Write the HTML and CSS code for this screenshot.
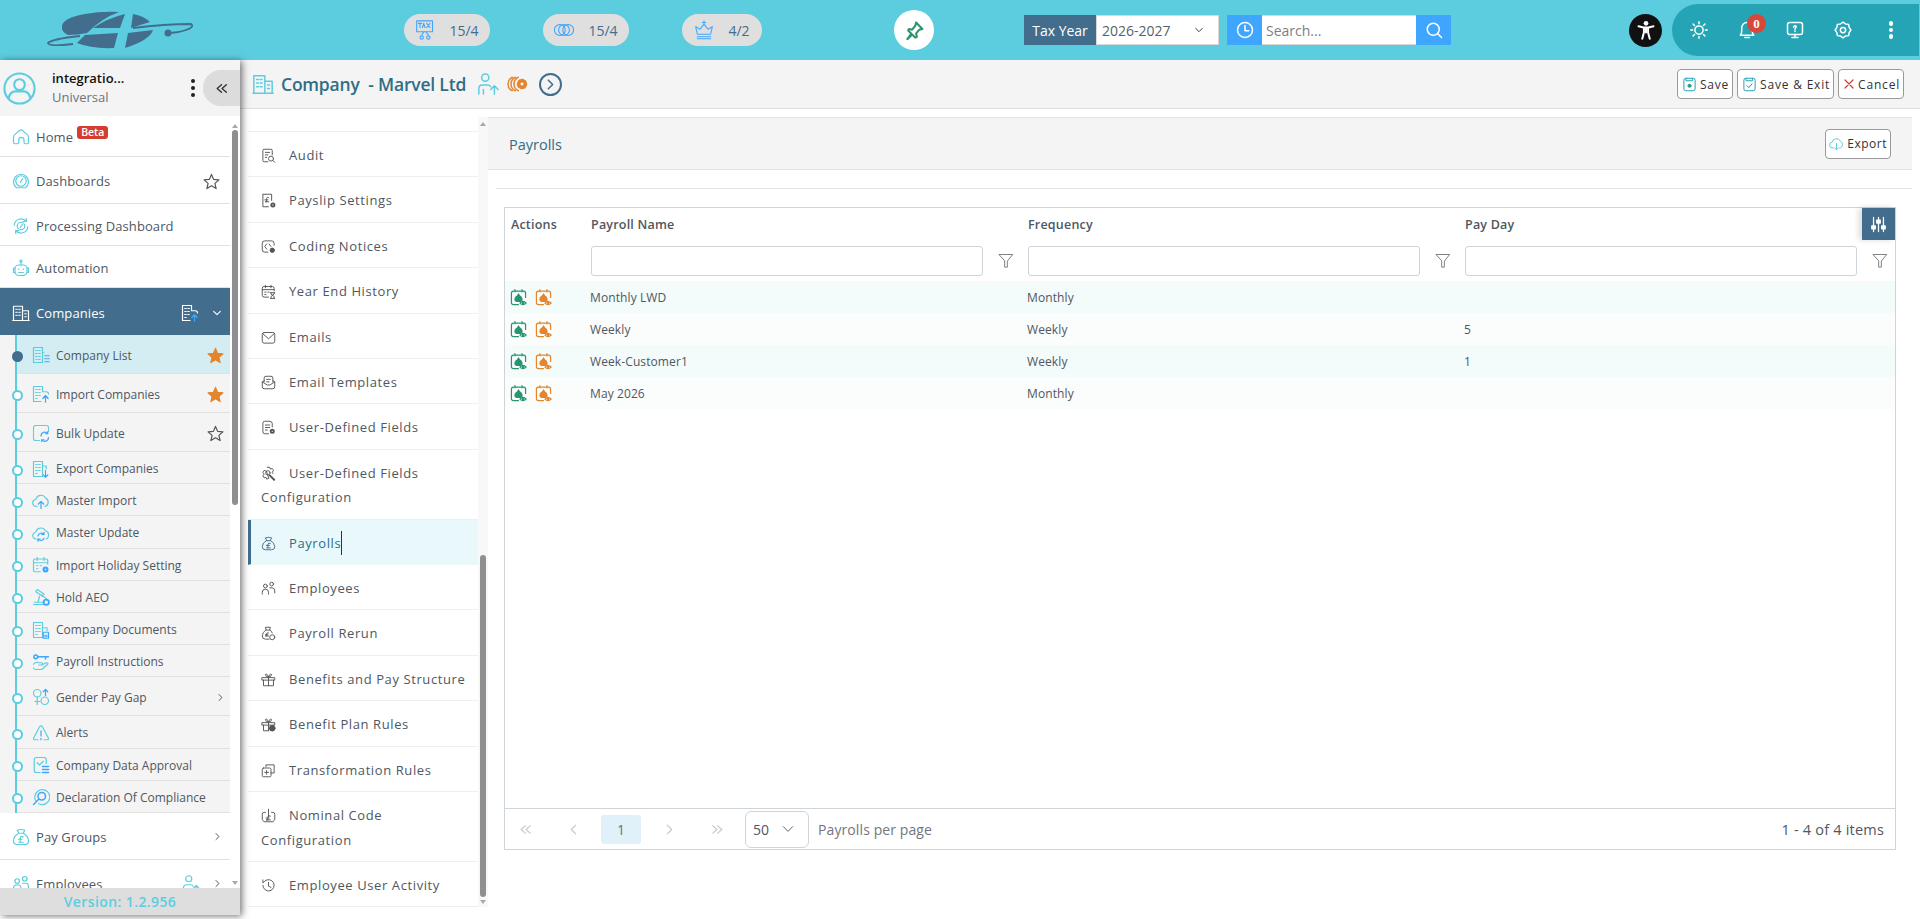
FILE: index.html
```html
<!DOCTYPE html>
<html lang="en">
<head>
    <meta charset="UTF-8">
    <meta name="viewport" content="width=device-width, initial-scale=1.0">
    <title>Company - Payrolls</title>
    <link rel="stylesheet" href="styles.css">
</head>
<body>
    <!-- Icon sprite -->
    <svg class="sprite" xmlns="http://www.w3.org/2000/svg">
        <defs>
            <symbol id="i-home" viewBox="0 0 24 24"><path d="M4 21q-2 0-2-2v-7q0-2 2-3.500l6.500-5.500q1.500-1 3 0l6.500 5.500q2 1.500 2 3.500v7q0 2-2 2h-2q-2 0-2-2v-3a3.500 3.500 0 0 0-7 0v3q0 2-2 2z"/></symbol>
            <symbol id="i-gauge" viewBox="0 0 24 24"><path d="M6 21a10 10 0 1 1 12 0z"/><circle cx="12" cy="12" r="7"/><path d="M11 14l3-5"/></symbol>
            <symbol id="i-gauge-sync" viewBox="0 0 24 24"><path d="M3 11a9 9 0 0 1 16-5M21 13a9 9 0 0 1-16 5"/><path d="M19 2v4h-4M5 22v-4h4"/><circle cx="12" cy="12" r="5"/><path d="M11 14l3-4"/></symbol>
            <symbol id="i-robot" viewBox="0 0 24 24"><circle cx="12" cy="3" r="1.500"/><path d="M12 5v3"/><rect x="4" y="8" width="16" height="14" rx="5"/><path d="M4 12H2v6h2M20 12h2v6h-2M9 13v1M15 13v1M9 18h6"/></symbol>
            <symbol id="i-building" viewBox="0 0 24 24"><path d="M2 22V3h12v19zM14 9h8v13h-8M1 22h22M5 7h2M9 7h2M5 11h2M9 11h2M5 15h2M9 15h2M17 13h2M17 17h2"/></symbol>
            <symbol id="i-building-up" viewBox="0 0 24 24"><path d="M12 22H2V2h12v7h5q3 0 3 3M5 6h2M9 6h2M5 10h2M9 10h2M5 14h2M9 14h2M5 18h2"/><path class="accent" d="M18 23v-8M14.500 18l3.500-4 3.500 4"/></symbol>
            <symbol id="i-building-list" viewBox="0 0 24 24"><path d="M2 22V2h12v20zM14 9h2M5 6h2M9 6h2M5 10h2M9 10h2M5 14h2M9 14h2M5 18h2M9 18h2"/><path class="accent" d="M17 13h6M17 17h6M17 21h6"/></symbol>
            <symbol id="i-building-down" viewBox="0 0 24 24"><path d="M2 22V2h12v20zM14 8h5v4M5 6h2M9 6h2M5 10h2M9 10h2M5 14h2M9 14h2M5 18h2"/><path class="accent" d="M18 14v9M15 20l3 3 3-3"/></symbol>
            <symbol id="i-building-doc" viewBox="0 0 24 24"><path d="M2 22V2h12v20zM14 9h6v4M5 6h2M9 6h2M5 10h2M9 10h2M5 14h2M9 14h2M5 18h2"/><path class="accent" d="M15 15h7v8h-7zM17 19h3M17 21h3"/></symbol>
            <symbol id="i-bulk" viewBox="0 0 24 24"><path stroke-dasharray="2 1" d="M10 22H5q-3 0-3-3V5q0-3 3-3h14q3 0 3 3v5"/><path class="accent" d="M12 16a5 5 0 0 1 9-3M22 18a5 5 0 0 1-9 3M21 10v3h-3M13 24v-3h3"/></symbol>
            <symbol id="i-cloud-up" viewBox="0 0 24 24"><path d="M7 19H6a4.500 4.500 0 0 1-1-9 7 7 0 0 1 13-2 6 6 0 0 1 0 11h-1"/><path class="accent" d="M12 22v-9M8.500 16l3.500-3.500 3.500 3.500"/></symbol>
            <symbol id="i-cloud-sync" viewBox="0 0 24 24"><path d="M6 20a4.500 4.500 0 0 1-1-9 7 7 0 0 1 13-2 6 6 0 0 1 1 11"/><path class="accent" d="M8 16a4.500 4.500 0 0 1 8-2M16 19a4.500 4.500 0 0 1-8 1M16 11v3h-3M8 23v-3h3"/></symbol>
            <symbol id="i-cal-gear" viewBox="0 0 24 24"><path d="M11 21H4q-2 0-2-2V6q0-2 2-2h15q2 0 2 2v5M2 9h19M7 2v4M16 2v4M6 13h2M11 13h2M6 17h2"/><circle class="accent" cx="18" cy="18" r="2.500" stroke-width="3"/></symbol>
            <symbol id="i-hold" viewBox="0 0 24 24"><path d="M2 22h14M3 19h12M8 19l2-8M5 5l9 6 2-3-9-6zM12 9l7 5"/><circle class="accent" cx="19" cy="19" r="3.500" stroke-width="2.400"/></symbol>
            <symbol id="i-hand-key" viewBox="0 0 24 24"><path d="M2 15q3-4 7-2h4q2 1 0 3h-4M13 16l6-3q3 0 2 2l-7 6q-1 1-3 1H5q-2 0-3-2"/><circle class="accent" cx="5" cy="5" r="2.500" stroke-width="2"/><path class="accent" d="M8 5h14M18 5v3" stroke-width="2"/></symbol>
            <symbol id="i-gender" viewBox="0 0 24 24"><circle cx="7" cy="7" r="5"/><path d="M7 12v10M4 18h6"/><circle cx="17" cy="17" r="5"/><path class="accent" d="M18 10V2M15 5l3-3 3 3"/></symbol>
            <symbol id="i-alert" viewBox="0 0 24 24"><path d="M8 21H4q-3 0-1.500-3L10 4q2-3 4 0l7.500 14q1.500 3-1.500 3h-4"/><path class="accent" d="M12 9v7M12 19v2"/></symbol>
            <symbol id="i-approve" viewBox="0 0 24 24"><path d="M11 22H6q-3 0-3-3V5q0-3 3-3h10q3 0 3 3v5"/><path d="M7 9l3 3 5-5"/><path class="accent" d="M14 14h8M14 18h8M14 22h8" stroke-width="2.200"/></symbol>
            <symbol id="i-search-circle" viewBox="0 0 24 24"><path d="M5 17a10 10 0 1 1 4 4"/><circle class="accent" cx="13" cy="11" r="5" stroke-width="2"/><path class="accent" d="M9 15l-7 7" stroke-width="2"/></symbol>
            <symbol id="i-moneybag" viewBox="0 0 24 24"><path d="M9 7L7 3q5-2 10 0l-2 4zM9 7q-7 4-7 10 0 5 5 5h10q5 0 5-5 0-6-7-10"/><path d="M15 12q-3-2-4 1v5q0 1-2 1h6M8.500 15h5"/></symbol>
            <symbol id="i-people" viewBox="0 0 24 24"><circle cx="7" cy="8" r="3"/><circle cx="17" cy="5" r="3"/><path d="M2 21v-3q0-5 5-5t5 5v3M14 11h4q4 0 4 5v3"/></symbol>
            <symbol id="i-star" viewBox="0 0 24 24"><path d="M12 2l3 7 7.500.7-5.700 5 1.700 7.300-6.500-3.900L5.500 22l1.700-7.300-5.700-5L9 9z"/></symbol>
            <symbol id="i-audit" viewBox="0 0 24 24"><path d="M11 22H5q-2 0-2-2V4q0-2 2-2h11q2 0 2 2v7M7 7h7M7 11h4M7 15h2"/><circle cx="16" cy="17" r="4"/><path d="M19 20l3 3"/></symbol>
            <symbol id="i-payslip" viewBox="0 0 24 24"><path stroke-dasharray="2 1" d="M12 22H3V2h14v11"/><path d="M12 7q-3-1-3 2v5H6.500h6M6 11h5"/><circle cx="19" cy="19" r="2.500" stroke-width="3"/></symbol>
            <symbol id="i-coding" viewBox="0 0 24 24"><path d="M11 21H6q-4 0-4-4V7q0-4 4-4h11q4 0 4 4v3M9 8l-3 4 3 4M13 8l3 4"/><circle cx="18" cy="18" r="3.500" fill="currentColor"/></symbol>
            <symbol id="i-year" viewBox="0 0 24 24"><path d="M12 21H5q-3 0-3-3V7q0-3 3-3h13q3 0 3 3v4M2 9h19M7 2v4M16 2v4M6 13h2M11 13h2M6 17h2"/><path d="M15 14h7M15 23h7M16 14v2l5 4v3M21 14v2l-5 4v3"/></symbol>
            <symbol id="i-mail" viewBox="0 0 24 24"><rect x="2" y="4" width="20" height="17" rx="3"/><path d="M3 6l9 8 9-8"/></symbol>
            <symbol id="i-mail-open" viewBox="0 0 24 24"><path d="M5 11V5q0-3 3-3h8q3 0 3 3v6M9 7h6M9 11h4M2 11v8q0 3 3 3h14q3 0 3-3v-8l-3-2M5 9l-3 2 8 5h4l8-5"/></symbol>
            <symbol id="i-fields" viewBox="0 0 24 24"><path d="M12 22H6q-3 0-3-3V5q0-3 3-3h8q4 0 4 4v5M7 8h7M7 12h7M7 16h3"/><circle cx="18" cy="18" r="2.500" stroke-width="3"/></symbol>
            <symbol id="i-cog-wrench" viewBox="0 0 24 24"><path d="M10 2h4l1 3 3-1 2 3-2 3 1 2M12 20l-3 1-1-3-3 1-2-3 2-3-2-3 2-3 3 1z"/><circle cx="11" cy="11" r="3.500"/><path d="M14 15l7 7" stroke-width="3"/></symbol>
            <symbol id="i-bag-clock" viewBox="0 0 24 24"><path d="M8 6L7 2h8l-1 4zM8 6q-6 4-6 10 0 5 5 5h6M14 6q3 2 4 5"/><path d="M12 11q-3-1-3 2v3H7h5M7 14h4"/><circle cx="18" cy="18" r="4"/></symbol>
            <symbol id="i-gift" viewBox="0 0 24 24"><path d="M2 9h20v4H2zM4 13v9h16v-9M12 9v13M12 8Q7 8 7 4q2-3 5 4 3-7 5-4 0 4-5 4"/></symbol>
            <symbol id="i-gift-check" viewBox="0 0 24 24"><path d="M2 9h20v4H2zM4 13v9h8M12 9v13M20 13v1M12 8Q7 8 7 4q2-3 5 4 3-7 5-4 0 4-5 4"/><circle cx="18" cy="18" r="4.500" fill="currentColor"/></symbol>
            <symbol id="i-transform" viewBox="0 0 24 24"><path d="M8 6V3h13v13h-5"/><rect x="2" y="8" width="14" height="14" rx="2"/><path d="M9 12v6M6 15h6"/></symbol>
            <symbol id="i-nominal" viewBox="0 0 24 24"><path d="M4 21q-2-1-2-3V10q0-3 3-3h2M20 21q2-1 2-3V10q0-3-3-3h-2M12 2v12"/><path d="M15 13q-3-2-4 1v5H8h7M8 16h5"/><path d="M5 22h14"/></symbol>
            <symbol id="i-history" viewBox="0 0 24 24"><path d="M3 12a9 9 0 1 0 3-7L3 8V3M12 7v6l4 2"/></symbol>
            <symbol id="i-tax" viewBox="0 0 24 24"><path d="M2 1h19v13H2zM11 14l-3 4M13 14l3 4"/><circle cx="8" cy="21" r="2"/><circle cx="16" cy="21" r="2"/><path d="M4 4h4M6 4v5M9 9l1.500-5L12 9M14 4l4 5M18 4l-4 5"/></symbol>
            <symbol id="i-rings" viewBox="0 0 24 24"><circle cx="7" cy="12" r="6.500"/><circle cx="12" cy="12" r="6.500"/><circle cx="17" cy="12" r="6.500"/></symbol>
            <symbol id="i-crown" viewBox="0 0 24 24"><path d="M4 17L2 8l5 3 5-6 5 6 5-3-2 9zM4 20h16M4 22.500h16M12 1v4M10 3h4" stroke-dasharray="2.200 .8"/></symbol>
            <symbol id="i-person-up" viewBox="0 0 24 24"><circle cx="9" cy="5" r="4"/><path d="M2 23v-6q0-4 4-4h5q3 0 4 2M7 18v5M19 23v-9M15 18l4-4 4 4"/></symbol>
            <symbol id="i-cog-ring" viewBox="0 0 24 24"><path d="M7 3a10 10 0 0 0 0 18M11 3a10 10 0 0 0 0 18M3 3a10 10 0 0 0 0 18" fill="none"/><circle cx="16" cy="12" r="4" stroke-width="4" stroke-dasharray="3 1"/><circle cx="16" cy="12" r="6" stroke-width="2" stroke-dasharray="2.500 2"/></symbol>
            <symbol id="i-pin" viewBox="0 0 24 24"><path d="M14 2l8 8-4 1-4 5 1 4-2 1-4-4-6 6 5-7-4-4 1-2 4 1 4-5z"/></symbol>
            <symbol id="i-clock" viewBox="0 0 24 24"><circle cx="12" cy="12" r="10"/><path d="M12 6v7h5"/></symbol>
            <symbol id="i-search" viewBox="0 0 24 24"><circle cx="11" cy="11" r="8"/><path d="M17 17l5 5"/></symbol>
            <symbol id="i-a11y" viewBox="0 0 24 24"><circle cx="12" cy="4" r="2.800" fill="currentColor" stroke="none"/><path d="M3 7.500l6 1.500h6l6-1.500M12 9v6M9.500 10v5l-2 7.500M14.500 10v5l2 7.500" stroke-width="2.400"/></symbol>
            <symbol id="i-sun" viewBox="0 0 24 24"><circle cx="12" cy="12" r="5.500"/><path d="M12 1v2.500M12 20.500V23M1 12h2.500M20.500 12H23M4.200 4.200l1.800 1.800M18 18l1.800 1.800M4.200 19.800L6 18M18 6l1.800-1.800"/></symbol>
            <symbol id="i-bell" viewBox="0 0 24 24"><path d="M3 19q2-2 2-6V9a7 7 0 0 1 14 0v4q0 4 2 6zM9 22h6"/></symbol>
            <symbol id="i-help" viewBox="0 0 24 24"><rect x="2" y="2" width="20" height="16" rx="3"/><path d="M8 22h8M12 18v4M10 8q1-2 3-1.500 1.500 1-1 3.500v1M12 13v1"/></symbol>
            <symbol id="i-gear" viewBox="0 0 24 24"><path d="M12 1.500l3.500 2.500 4 .5.700 4 2.300 3.500-2.300 3.500-.7 4-4 .5-3.500 2.500-3.500-2.500-4-.5-.7-4L1.500 12l2.300-3.500.7-4 4-.5z"/><circle cx="12" cy="12" r="3.500"/></symbol>
            <symbol id="i-sliders" viewBox="0 0 24 24"><path d="M5 2v20M12 2v20M19 2v20"/><rect x="2.500" y="14" width="5" height="4" fill="currentColor"/><rect x="9.500" y="6" width="5" height="4" fill="currentColor"/><rect x="16.500" y="14" width="5" height="4" fill="currentColor"/></symbol>
            <symbol id="i-filter" viewBox="0 0 24 24"><path d="M2 3h20l-8 10v9h-4v-9z"/></symbol>
            <symbol id="i-save" viewBox="0 0 24 24"><path d="M7 2H6Q3 2 3 5v14q0 3 3 3h12q3 0 3-3V5q0-3-3-3h-1M7 2h10v4H7z"/><circle class="green" cx="12" cy="14" r="2.500" fill="#2a9d7c"/></symbol>
            <symbol id="i-save-exit" viewBox="0 0 24 24"><path d="M7 2H6Q3 2 3 5v14q0 3 3 3h12q3 0 3-3V5q0-3-3-3h-1M7 2h10v4H7z"/><path class="green" d="M8 14l3 3 5-6"/></symbol>
            <symbol id="i-cloud-down" viewBox="0 0 24 24"><path d="M7 19H6a4.500 4.500 0 0 1-1-9 7 7 0 0 1 13-2 6 6 0 0 1 0 11h-1M12 12v10M9 19l3 3 3-3"/></symbol>
            <symbol id="i-chev-down" viewBox="0 0 24 24"><path d="M4 8l8 8 8-8"/></symbol>
            <symbol id="i-chev-right" viewBox="0 0 24 24"><path d="M8 4l8 8-8 8"/></symbol>
            <symbol id="i-chev-left" viewBox="0 0 24 24"><path d="M16 4l-8 8 8 8"/></symbol>
            <symbol id="i-first" viewBox="0 0 24 24"><path d="M12 5l-8 7 8 7M21 5l-8 7 8 7"/></symbol>
            <symbol id="i-last" viewBox="0 0 24 24"><path d="M3 5l8 7-8 7M12 5l8 7-8 7"/></symbol>
            <symbol id="i-avatar" viewBox="0 0 34 34"><circle cx="17" cy="17" r="15.500"/><circle cx="17" cy="13" r="5.500"/><path d="M6 27q1-7 7-7h8q6 0 7 7"/></symbol>
            <symbol id="i-act" viewBox="0 0 24 24"><path d="M12 22H5q-3 0-3-3V6q0-3 3-3h14q3 0 3 3v6M7 1v3M17 1v3"/><path d="M12 7l1.500 2.500q3.500 2 3.500 5 0 3-3 3h-4q-3 0-3-3 0-3 3.500-5z" fill="currentColor"/><path d="M14 20q4-5 9 0-5 4-9 0z" stroke-width="1.500"/><circle cx="18.500" cy="20" r="1" fill="currentColor"/></symbol>
            <symbol id="i-logo" viewBox="0 0 160 50">
                <path class="logo-body" d="M22 21Q23 13 45 9 62 6 79 7 62 13 47 28 38 30 28 30 21 27 22 21z"/>
                <path class="logo-body" d="M53 23Q68 13 85 9L80 23z"/>
                <path class="logo-body" d="M93 9Q104 11 110 17 100 20 91 23z"/>
                <path class="logo-body" d="M45 30L78 28 74 43Q52 44 37 38z"/>
                <path class="logo-body" d="M88 28L113 25Q110 35 85 43z"/>
                <path class="logo-orbit" d="M40 31Q12 34 8 38 9 42 33 39M93 23Q125 19 151 19 155 22 146 25 138 28 130 28"/>
                <circle class="logo-dot" cx="128" cy="28" r="3.500"/>
            </symbol>
        </defs>
    </svg>

    <!-- Top bar -->
    <header class="topbar">
        <a class="logo" href="#home"><svg class="logo-svg"><use href="#i-logo"/></svg></a>
        <div class="counts">
            <div class="count"><svg class="icon count-icon"><use href="#i-tax"/></svg>15/4</div>
            <div class="count"><svg class="icon count-icon"><use href="#i-rings"/></svg>15/4</div>
            <div class="count count-small"><svg class="icon count-icon"><use href="#i-crown"/></svg>4/2</div>
        </div>
        <button class="pin-btn"><svg class="icon pin-icon"><use href="#i-pin"/></svg></button>
        <div class="tax-year">
            <span class="tax-label">Tax Year</span>
            <div class="tax-select">2026-2027<svg class="icon tax-chev"><use href="#i-chev-down"/></svg></div>
        </div>
        <div class="search">
            <button class="search-btn"><svg class="icon search-icon"><use href="#i-clock"/></svg></button>
            <input class="search-input" type="text" placeholder="Search...">
            <button class="search-btn search-go"><svg class="icon search-icon"><use href="#i-search"/></svg></button>
        </div>
        <button class="a11y-btn"><svg class="icon a11y-icon"><use href="#i-a11y"/></svg></button>
        <div class="tools">
            <svg class="icon tool-icon"><use href="#i-sun"/></svg>
            <div class="bell">
                <svg class="icon tool-icon"><use href="#i-bell"/></svg>
                <span class="badge">0</span>
            </div>
            <svg class="icon tool-icon"><use href="#i-help"/></svg>
            <svg class="icon tool-icon"><use href="#i-gear"/></svg>
            <div class="dots dots-white"><i></i><i></i><i></i></div>
        </div>
    </header>

    <div class="layout">
        <!-- Sidebar -->
        <aside class="sidebar">
            <div class="user">
                <svg class="icon user-avatar"><use href="#i-avatar"/></svg>
                <div class="user-info">
                    <div class="user-name">integratio...</div>
                    <div class="user-role">Universal</div>
                </div>
                <div class="dots"><i></i><i></i><i></i></div>
                <button class="collapse"><svg class="icon collapse-icon"><use href="#i-first"/></svg></button>
            </div>
            <div class="side-scroll">
                <nav class="side-nav">
                    <a class="nav-item home-item"><svg class="icon nav-icon"><use href="#i-home"/></svg>Home<span class="beta">Beta</span></a>
                    <a class="nav-item tall"><svg class="icon nav-icon"><use href="#i-gauge"/></svg>Dashboards<svg class="icon star"><use href="#i-star"/></svg></a>
                    <a class="nav-item"><svg class="icon nav-icon"><use href="#i-gauge-sync"/></svg>Processing Dashboard</a>
                    <a class="nav-item"><svg class="icon nav-icon"><use href="#i-robot"/></svg>Automation</a>
                    <a class="nav-item tall nav-open"><svg class="icon nav-icon"><use href="#i-building"/></svg>Companies<svg class="icon nav-extra"><use href="#i-building-up"/></svg><svg class="icon nav-chev"><use href="#i-chev-down"/></svg></a>
                    <div class="sub-list">
                        <a class="sub-item tall active"><svg class="icon sub-icon"><use href="#i-building-list"/></svg>Company List<svg class="icon star starred"><use href="#i-star"/></svg></a>
                        <a class="sub-item tall"><svg class="icon sub-icon"><use href="#i-building-up"/></svg>Import Companies<svg class="icon star starred"><use href="#i-star"/></svg></a>
                        <a class="sub-item tall"><svg class="icon sub-icon"><use href="#i-bulk"/></svg>Bulk Update<svg class="icon star"><use href="#i-star"/></svg></a>
                        <a class="sub-item"><svg class="icon sub-icon"><use href="#i-building-down"/></svg>Export Companies</a>
                        <a class="sub-item"><svg class="icon sub-icon"><use href="#i-cloud-up"/></svg>Master Import</a>
                        <a class="sub-item"><svg class="icon sub-icon"><use href="#i-cloud-sync"/></svg>Master Update</a>
                        <a class="sub-item"><svg class="icon sub-icon"><use href="#i-cal-gear"/></svg>Import Holiday Setting</a>
                        <a class="sub-item"><svg class="icon sub-icon"><use href="#i-hold"/></svg>Hold AEO</a>
                        <a class="sub-item"><svg class="icon sub-icon"><use href="#i-building-doc"/></svg>Company Documents</a>
                        <a class="sub-item"><svg class="icon sub-icon"><use href="#i-hand-key"/></svg>Payroll Instructions</a>
                        <a class="sub-item tall"><svg class="icon sub-icon"><use href="#i-gender"/></svg>Gender Pay Gap<svg class="icon sub-chev"><use href="#i-chev-right"/></svg></a>
                        <a class="sub-item"><svg class="icon sub-icon"><use href="#i-alert"/></svg>Alerts</a>
                        <a class="sub-item"><svg class="icon sub-icon"><use href="#i-approve"/></svg>Company Data Approval</a>
                        <a class="sub-item"><svg class="icon sub-icon"><use href="#i-search-circle"/></svg>Declaration Of Compliance</a>
                    </div>
                    <a class="nav-item tall"><svg class="icon nav-icon"><use href="#i-moneybag"/></svg>Pay Groups<svg class="icon nav-chev"><use href="#i-chev-right"/></svg></a>
                    <a class="nav-item tall"><svg class="icon nav-icon"><use href="#i-people"/></svg>Employees<svg class="icon nav-extra"><use href="#i-person-up"/></svg><svg class="icon nav-chev"><use href="#i-chev-right"/></svg></a>
                </nav>
                <div class="side-track"><div class="arrow-up"></div><div class="side-thumb"></div><div class="arrow-down"></div></div>
            </div>
            <div class="version">Version: 1.2.956</div>
        </aside>

        <div class="main">
            <!-- Title bar -->
            <div class="titlebar">
                <svg class="icon title-icon"><use href="#i-building"/></svg>
                <h1 class="title">Company&nbsp; - Marvel Ltd</h1>
                <svg class="icon title-person"><use href="#i-person-up"/></svg>
                <svg class="icon title-cog"><use href="#i-cog-ring"/></svg>
                <span class="title-next"><svg class="icon next-icon"><use href="#i-chev-right"/></svg></span>
                <div class="title-actions">
                    <button class="btn"><svg class="icon btn-icon"><use href="#i-save"/></svg>Save</button>
                    <button class="btn"><svg class="icon btn-icon"><use href="#i-save-exit"/></svg>Save &amp; Exit</button>
                    <button class="btn"><svg class="icon btn-x" viewBox="0 0 24 24"><path d="M4 4l16 16M20 4L4 20"/></svg>Cancel</button>
                </div>
            </div>

            <div class="work">
                <!-- Section menu -->
                <div class="section-col">
                    <div class="section-list">
                        <div class="section-cut"></div>
                        <a class="section-item"><svg class="icon section-icon"><use href="#i-audit"/></svg>Audit</a>
                        <a class="section-item"><svg class="icon section-icon"><use href="#i-payslip"/></svg>Payslip Settings</a>
                        <a class="section-item"><svg class="icon section-icon"><use href="#i-coding"/></svg>Coding Notices</a>
                        <a class="section-item"><svg class="icon section-icon"><use href="#i-year"/></svg>Year End History</a>
                        <a class="section-item"><svg class="icon section-icon"><use href="#i-mail"/></svg>Emails</a>
                        <a class="section-item"><svg class="icon section-icon"><use href="#i-mail-open"/></svg>Email Templates</a>
                        <a class="section-item"><svg class="icon section-icon"><use href="#i-fields"/></svg>User-Defined Fields</a>
                        <a class="section-item"><svg class="icon section-icon"><use href="#i-cog-wrench"/></svg>User-Defined Fields Configuration</a>
                        <a class="section-item current"><svg class="icon section-icon"><use href="#i-moneybag"/></svg><span class="caret">Payrolls</span></a>
                        <a class="section-item"><svg class="icon section-icon"><use href="#i-people"/></svg>Employees</a>
                        <a class="section-item"><svg class="icon section-icon"><use href="#i-bag-clock"/></svg>Payroll Rerun</a>
                        <a class="section-item"><svg class="icon section-icon"><use href="#i-gift"/></svg>Benefits and Pay Structure</a>
                        <a class="section-item"><svg class="icon section-icon"><use href="#i-gift-check"/></svg>Benefit Plan Rules</a>
                        <a class="section-item"><svg class="icon section-icon"><use href="#i-transform"/></svg>Transformation Rules</a>
                        <a class="section-item"><svg class="icon section-icon"><use href="#i-nominal"/></svg>Nominal Code Configuration</a>
                        <a class="section-item"><svg class="icon section-icon"><use href="#i-history"/></svg>Employee User Activity</a>
                    </div>
                    <div class="section-track"><div class="arrow-up"></div><div class="section-thumb"></div><div class="arrow-down"></div></div>
                </div>

                <!-- Payrolls panel -->
                <div class="content">
                    <div class="panel-head">
                        <h2 class="panel-title">Payrolls</h2>
                        <button class="btn btn-export"><svg class="icon btn-icon export-icon"><use href="#i-cloud-down"/></svg>Export</button>
                    </div>
                    <div class="panel-rule"></div>
                    <div class="grid">
                        <div class="grid-body">
                            <button class="col-btn"><svg class="icon col-icon"><use href="#i-sliders"/></svg></button>
                            <table class="grid-table">
                                <colgroup><col class="col-actions"><col><col><col></colgroup>
                                <thead>
                                    <tr class="head-row">
                                        <th class="actions-head">Actions</th>
                                        <th>Payroll Name</th>
                                        <th>Frequency</th>
                                        <th>Pay Day</th>
                                    </tr>
                                    <tr class="filter-row">
                                        <td></td>
                                        <td><div class="filter"><input class="filter-input" type="text"><svg class="icon filter-icon"><use href="#i-filter"/></svg></div></td>
                                        <td><div class="filter"><input class="filter-input" type="text"><svg class="icon filter-icon"><use href="#i-filter"/></svg></div></td>
                                        <td><div class="filter"><input class="filter-input" type="text"><svg class="icon filter-icon"><use href="#i-filter"/></svg></div></td>
                                    </tr>
                                </thead>
                                <tbody>
                                    <tr>
                                        <td class="actions"><svg class="icon act-green"><use href="#i-act"/></svg><svg class="icon act-orange"><use href="#i-act"/></svg></td>
                                        <td>Monthly LWD</td><td>Monthly</td><td></td>
                                    </tr>
                                    <tr>
                                        <td class="actions"><svg class="icon act-green"><use href="#i-act"/></svg><svg class="icon act-orange"><use href="#i-act"/></svg></td>
                                        <td>Weekly</td><td>Weekly</td><td>5</td>
                                    </tr>
                                    <tr>
                                        <td class="actions"><svg class="icon act-green"><use href="#i-act"/></svg><svg class="icon act-orange"><use href="#i-act"/></svg></td>
                                        <td>Week-Customer1</td><td>Weekly</td><td>1</td>
                                    </tr>
                                    <tr>
                                        <td class="actions"><svg class="icon act-green"><use href="#i-act"/></svg><svg class="icon act-orange"><use href="#i-act"/></svg></td>
                                        <td>May 2026</td><td>Monthly</td><td></td>
                                    </tr>
                                </tbody>
                            </table>
                        </div>
                        <div class="pager">
                            <svg class="icon pager-arrow"><use href="#i-first"/></svg>
                            <svg class="icon pager-arrow"><use href="#i-chev-left"/></svg>
                            <span class="pager-num">1</span>
                            <svg class="icon pager-arrow"><use href="#i-chev-right"/></svg>
                            <svg class="icon pager-arrow"><use href="#i-last"/></svg>
                            <div class="pager-size">50<svg class="icon pager-chev"><use href="#i-chev-down"/></svg></div>
                            <span class="pager-label">Payrolls per page</span>
                            <span class="pager-info">1 - 4 of 4 items</span>
                        </div>
                    </div>
                </div>
            </div>
        </div>
    </div>
</body>
</html>
```
FILE: styles.css
```css
* {
    box-sizing: border-box;
}

html, body {
    height: 100%;
}

body {
    font-family: "Open Sans", Arial, sans-serif;
    font-size: 13px;
    color: #4f5761;
    background-color: #fff;
    margin: 0;
    padding: 0;
    overflow: hidden;
    display: flex;
    flex-direction: column;
}

a {
    color: inherit;
    text-decoration: none;
}

button {
    font-family: inherit;
    cursor: pointer;
}

.sprite {
    width: 0;
    height: 0;
    display: block;
    overflow: hidden;
}

.icon {
    fill: none;
    stroke: currentColor;
    stroke-width: 1.6;
    stroke-linecap: round;
    stroke-linejoin: round;
    flex-shrink: 0;
}

.accent {
    stroke: #3ea6ff;
}

.green {
    stroke: #2a9d7c;
}

/* Top bar */
.topbar {
    height: 60px;
    flex-shrink: 0;
    background-color: #5bcddf;
    display: flex;
    align-items: center;
}

.logo {
    margin-left: 40px;
    width: 160px;
    height: 50px;
}

.logo-svg {
    width: 160px;
    height: 50px;
    display: block;
}

.logo-body {
    fill: #436d8d;
}

.logo-orbit {
    fill: none;
    stroke: #436d8d;
    stroke-width: 1.800;
}

.logo-dot {
    fill: #436d8d;
}

.counts {
    margin-left: 204px;
    display: flex;
    gap: 53px;
}

.count {
    width: 86px;
    height: 32px;
    border-radius: 16px;
    background-color: #dfdfdf;
    color: #436d8d;
    font-size: 14px;
    display: flex;
    align-items: center;
    justify-content: center;
    gap: 14px;
}

.count-small {
    width: 80px;
}

.count-icon {
    width: 20px;
    height: 22px;
    color: #3ea6ff;
    stroke-width: 1.300;
}

.pin-btn {
    margin-left: 132px;
    width: 40px;
    height: 40px;
    border: none;
    border-radius: 50%;
    background-color: #fff;
    display: flex;
    align-items: center;
    justify-content: center;
    padding: 0;
}

.pin-icon {
    width: 19px;
    height: 19px;
    color: #2a9471;
    stroke-width: 2.600;
}

.tax-year {
    margin-left: 90px;
    display: flex;
    height: 30px;
}

.tax-label {
    width: 72px;
    background-color: #436d8d;
    color: #fff;
    font-size: 14px;
    display: flex;
    align-items: center;
    justify-content: center;
}

.tax-select {
    width: 123px;
    background-color: #fff;
    border: 1px solid #d8d8d8;
    font-size: 14px;
    color: #5a5f66;
    display: flex;
    align-items: center;
    justify-content: space-between;
    padding: 0 14px 0 5px;
}

.tax-chev {
    width: 10px;
    height: 10px;
    stroke-width: 2.400;
    color: #444;
}

.search {
    margin-left: 8px;
    display: flex;
    height: 30px;
}

.search-btn {
    width: 35px;
    background-color: #3ea6ff;
    border: none;
    color: #fff;
    padding: 0;
    display: flex;
    align-items: center;
    justify-content: center;
}

.search-input {
    width: 154px;
    border: 1px solid #d8d8d8;
    border-width: 1px 0;
    padding: 0 4px;
    font-family: inherit;
    font-size: 14px;
    outline: none;
}

.search-input::placeholder {
    color: #7a7f85;
}

.search-icon {
    width: 18px;
    height: 18px;
    stroke-width: 2;
}

.a11y-btn {
    margin-left: 178px;
    width: 33px;
    height: 33px;
    border: none;
    border-radius: 50%;
    background-color: #111;
    color: #fff;
    padding: 0;
    display: flex;
    align-items: center;
    justify-content: center;
}

.a11y-icon {
    width: 20px;
    height: 20px;
}

.tools {
    margin-left: 10px;
    width: 247px;
    height: 52px;
    border-radius: 26px 0 0 26px;
    background-color: #25a4b5;
    color: #fff;
    display: flex;
    align-items: center;
    gap: 30px;
    padding-left: 18px;
}

.tool-icon {
    width: 18px;
    height: 18px;
    display: block;
    stroke-width: 2;
}

.bell {
    position: relative;
}

.badge {
    position: absolute;
    top: -7px;
    left: 9px;
    width: 19px;
    height: 19px;
    border-radius: 50%;
    background-color: #d9463a;
    color: #fff;
    font-family: "Liberation Serif", serif;
    font-size: 13px;
    font-weight: 700;
    display: flex;
    align-items: center;
    justify-content: center;
}

.dots {
    display: flex;
    flex-direction: column;
    gap: 3px;
    align-items: center;
}

.dots i {
    width: 4px;
    height: 4px;
    border-radius: 50%;
    background-color: #222;
}

.dots-white {
    width: 18px;
    gap: 2px;
}

.dots-white i {
    width: 4.500px;
    height: 4.500px;
    background-color: #fff;
}

/* Page layout */
.layout {
    flex: 1;
    display: flex;
    min-height: 0;
}

.sidebar {
    width: 240px;
    flex-shrink: 0;
    margin-bottom: 4px;
    display: flex;
    flex-direction: column;
    background-color: #fff;
    box-shadow: 2px 1px 7px rgba(0, 0, 0, 0.55);
    position: relative;
    z-index: 2;
}

.user {
    height: 56px;
    flex-shrink: 0;
    background-color: #f4f4f4;
    display: flex;
    align-items: center;
    padding-left: 3px;
}

.user-avatar {
    width: 33px;
    height: 33px;
    color: #5bcddf;
    stroke-width: 2.200;
}

.user-info {
    margin-left: 16px;
    width: 137px;
    font-size: 13px;
}

.user-name {
    color: #111;
    font-weight: 600;
    line-height: 19px;
}

.user-role {
    color: #6c737a;
    line-height: 19px;
}

.user .dots {
    width: 8px;
}

.collapse {
    margin-left: 6px;
    width: 37px;
    height: 36px;
    border: none;
    border-radius: 18px 0 0 18px;
    background-color: #dcdcdc;
    color: #333;
    padding: 0;
    display: flex;
    align-items: center;
    justify-content: center;
}

.collapse-icon {
    width: 13px;
    height: 13px;
    stroke-width: 2.600;
}

.side-scroll {
    flex: 1;
    min-height: 0;
    display: flex;
    overflow: hidden;
}

.side-nav {
    width: 230px;
    flex-shrink: 0;
    letter-spacing: 0.1px;
}

.nav-item {
    height: 42px;
    display: flex;
    align-items: center;
    padding: 2px 10px 0 12px;
    border-bottom: 1px solid #e1e1e1;
    background-color: #fff;
    font-size: 13px;
}

.nav-item.tall {
    height: 47px;
}

.home-item {
    height: 41px;
}

.nav-icon {
    width: 18px;
    height: 18px;
    color: #5bcddf;
    margin-right: 6px;
}

.beta {
    background-color: #d23f31;
    color: #fff;
    font-size: 10.500px;
    font-weight: 600;
    letter-spacing: 0;
    line-height: 13px;
    padding: 0 4px;
    border-radius: 3px;
    margin: -10px 0 0 4px;
}

.nav-open {
    background-color: #436d8d;
    color: #fff;
    border-bottom: none;
    font-weight: 500;
}

.nav-open .nav-icon,
.nav-open .nav-extra {
    color: #fff;
}

.nav-open .accent {
    stroke: #fff;
}

.nav-extra {
    width: 18px;
    height: 18px;
    margin-left: auto;
    margin-right: 13px;
    color: #5bcddf;
}

.nav-chev {
    width: 9px;
    height: 9px;
    margin-left: auto;
    stroke-width: 2.600;
    margin-right: -2px;
}

.nav-open .nav-chev {
    width: 10px;
    height: 10px;
    margin-left: 0;
}

.nav-extra + .nav-chev {
    margin-left: 0;
}

.star {
    width: 17px;
    height: 17px;
    margin-left: auto;
    stroke-width: 1.700;
    color: #555;
}

.starred {
    color: #e5842b;
    fill: #e5842b;
}

.sub-list {
    position: relative;
    background-color: #f4f4f4;
}

.sub-list::before {
    content: "";
    position: absolute;
    left: 15px;
    top: 0;
    bottom: 0;
    width: 2px;
    background-color: #5bcddf;
}

.sub-item {
    position: relative;
    height: 32.200px;
    margin-left: 17px;
    display: flex;
    align-items: center;
    padding: 2px 6px 0 15px;
    border-bottom: 1px solid #e1e1e1;
    font-size: 12px;
    letter-spacing: 0;
}

.sub-item.tall {
    height: 39px;
}

.sub-item::before {
    content: "";
    position: absolute;
    left: -5px;
    top: 50%;
    width: 7px;
    height: 7px;
    margin-top: -3px;
    border-radius: 50%;
    border: 2px solid #5bcddf;
    background-color: #fff;
}

.sub-item.active {
    background-color: #d4edf2;
}

.sub-item.active::before {
    border-color: #436d8d;
    background-color: #436d8d;
}

.sub-icon {
    width: 18px;
    height: 18px;
    color: #5bcddf;
    margin-right: 6px;
}

.sub-chev {
    width: 9px;
    height: 9px;
    margin-left: auto;
    margin-right: -1px;
    stroke-width: 2.600;
}

.side-track {
    flex: 1;
    display: flex;
    flex-direction: column;
    align-items: center;
    padding-top: 8px;
    background-color: #fff;
}

.side-thumb {
    width: 6px;
    height: 375px;
    margin-top: 2px;
    border-radius: 3px;
    background-color: #8f8f92;
}

.arrow-up,
.arrow-down {
    width: 0;
    height: 0;
    border-left: 3px solid transparent;
    border-right: 3px solid transparent;
}

.arrow-up {
    border-bottom: 4px solid #a8a8a8;
}

.arrow-down {
    margin-top: auto;
    margin-bottom: 3px;
    border-top: 4px solid #a8a8a8;
}

.version {
    height: 27px;
    flex-shrink: 0;
    background-color: #dedede;
    color: #5bcddf;
    font-size: 14px;
    font-weight: 600;
    letter-spacing: 0.4px;
    display: flex;
    align-items: center;
    justify-content: center;
}

.main {
    flex: 1;
    min-width: 0;
    display: flex;
    flex-direction: column;
}

/* Title bar */
.titlebar {
    height: 49px;
    flex-shrink: 0;
    background-color: #f4f4f4;
    border-bottom: 1px solid #dedede;
    display: flex;
    align-items: center;
    padding: 0 16px 0 12px;
}

.title-icon {
    width: 22px;
    height: 24px;
    color: #5bcddf;
}

.title {
    margin: 0 0 0 7px;
    font-size: 17.500px;
    font-weight: 600;
    color: #2f6e86;
    letter-spacing: -0.2px;
}

.title-person {
    margin-left: 11px;
    width: 22px;
    height: 24px;
    color: #5bcddf;
}

.title-cog {
    margin-left: 7px;
    width: 26px;
    height: 18px;
    color: #e5842b;
    stroke-width: 2;
}

.title-next {
    margin-left: 7px;
    width: 23px;
    height: 23px;
    border: 2px solid #436d8d;
    border-radius: 50%;
    color: #436d8d;
    display: flex;
    align-items: center;
    justify-content: center;
}

.next-icon {
    width: 13px;
    height: 13px;
    stroke-width: 2.800;
}

.title-actions {
    margin-left: auto;
    display: flex;
    gap: 4px;
}

.btn {
    height: 30px;
    padding: 0 3px 0 4px;
    border: 1px solid #9a9a9a;
    border-radius: 4px;
    background-color: #fff;
    color: #333;
    font-size: 12px;
    display: flex;
    align-items: center;
    gap: 3px;
    letter-spacing: 0.8px;
}

.btn-icon {
    width: 15px;
    height: 15px;
    color: #25a4b5;
}

.btn-x {
    width: 12px;
    height: 12px;
    color: #d63a2f;
    stroke-width: 2.400;
}

.work {
    flex: 1;
    min-height: 0;
    display: flex;
}

/* Section menu */
.section-col {
    width: 248px;
    flex-shrink: 0;
    display: flex;
    padding: 8px 0 12px 8px;
}

.section-list {
    width: 230px;
    flex-shrink: 0;
    letter-spacing: 0.6px;
    font-size: 13px;
}

.section-cut {
    height: 15px;
    border-bottom: 1px solid #efefef;
}

.section-item {
    display: block;
    padding: 11px 3px 9px 13px;
    line-height: 24.400px;
    border-bottom: 1px solid #efefef;
}

.section-icon {
    width: 15px;
    height: 15px;
    margin-right: 13px;
    vertical-align: -3px;
    stroke-width: 1.500;
    color: #555;
}

.section-item.current {
    background-color: #e9f8fb;
    color: #2f6e86;
    font-weight: 500;
    border-left: 3px solid #436d8d;
    border-bottom-color: transparent;
    padding-left: 10px;
}

.current .section-icon {
    color: #436d8d;
}

.caret {
    border-right: 1px solid #333;
    padding: 3px 0;
}

.section-track {
    width: 10px;
    background-color: #f8f8f8;
    display: flex;
    flex-direction: column;
    align-items: center;
    padding: 5px 0 0;
}

.section-thumb {
    width: 6px;
    height: 342px;
    margin-top: 429px;
    border-radius: 3px;
    background-color: #8f8f92;
}

/* Payrolls panel */
.content {
    flex: 1;
    min-width: 0;
    display: flex;
    flex-direction: column;
    padding: 8px 8px 0 0;
}

.panel-head {
    height: 53px;
    flex-shrink: 0;
    background-color: #f4f4f4;
    border-top: 1px solid #e2e2e2;
    border-bottom: 1px solid #e2e2e2;
    display: flex;
    align-items: center;
    justify-content: space-between;
    padding: 0 21px;
}

.panel-title {
    margin: 1px 0 0;
    font-size: 14.500px;
    font-weight: 500;
    color: #2f6e86;
}

.btn-export {
    padding: 0 3px;
    letter-spacing: 0.5px;
}

.export-icon {
    color: #5bcddf;
}

.panel-rule {
    height: 1px;
    margin: 18px 0 18px 8px;
    background-color: #e4e4e4;
}

.grid {
    margin: 0 16px;
    height: 643px;
    border: 1px solid #cdd5db;
    display: flex;
    flex-direction: column;
}

.grid-body {
    flex: 1;
    min-height: 0;
    position: relative;
}

.col-btn {
    position: absolute;
    top: 0;
    right: 0;
    width: 33px;
    height: 32px;
    border: none;
    background-color: #436d8d;
    color: #fff;
    box-shadow: -3px 0 6px rgba(0, 0, 0, 0.15);
    padding: 0;
    display: flex;
    align-items: center;
    justify-content: center;
}

.col-icon {
    width: 17px;
    height: 17px;
    stroke-width: 1.800;
}

.grid-table {
    width: 100%;
    border-collapse: collapse;
    table-layout: fixed;
}

.col-actions {
    width: 79px;
}

.grid-table th {
    height: 32px;
    padding: 0 0 0 7px;
    text-align: left;
    font-size: 12.500px;
    font-weight: 600;
    color: #4f5761;
    letter-spacing: 0.2px;
}

.grid-table th.actions-head {
    padding-left: 6px;
}

.filter-row td {
    height: 41px;
    padding: 0 0 0 7px;
}

.filter {
    display: flex;
    align-items: center;
}

.filter-input {
    width: 392px;
    height: 30px;
    border: 1px solid #cdd5db;
    border-radius: 3px;
    outline: none;
}

.filter-icon {
    width: 16px;
    height: 17px;
    margin-left: 15px;
    color: #777;
    stroke-width: 1.400;
}

.grid-table tbody tr {
    height: 32px;
    background-color: #fbfcfc;
}

.grid-table tbody tr:nth-child(odd) {
    background-color: #f4fbfb;
}

.grid-table tbody td {
    padding: 0 0 0 6px;
    font-size: 12px;
    letter-spacing: 0.1px;
}

.grid-table tbody td.actions {
    padding-left: 5px;
}

.actions svg {
    width: 17px;
    height: 17px;
    margin-right: 8px;
    vertical-align: middle;
    stroke-width: 1.700;
}

.act-green {
    color: #2a9471;
}

.act-orange {
    color: #e5842b;
}

.pager {
    height: 41px;
    flex-shrink: 0;
    border-top: 1px solid #cdd5db;
    display: flex;
    align-items: center;
    padding: 0 11px 0 14px;
    font-size: 14px;
    color: #70777e;
}

.pager-arrow {
    width: 13px;
    height: 13px;
    color: #c2c7cc;
    stroke-width: 2;
    margin-right: 35px;
}

.pager-num {
    width: 40px;
    height: 29px;
    margin: 0 22px 0 -14px;
    border-radius: 3px;
    background-color: #e0f1f9;
    color: #6a7178;
    display: flex;
    align-items: center;
    justify-content: center;
    font-size: 14px;
}

.pager-size {
    width: 64px;
    height: 37px;
    margin-left: -14px;
    border: 1px solid #cdd5db;
    border-radius: 6px;
    color: #4f5761;
    font-size: 14px;
    display: flex;
    align-items: center;
    justify-content: space-between;
    padding: 0 13px 0 7px;
}

.pager-chev {
    width: 14px;
    height: 14px;
    color: #555;
}

.pager-label {
    margin-left: 9px;
    letter-spacing: 0.1px;
}

.pager-info {
    margin-left: auto;
    color: #4f5761;
    font-size: 14.500px;
    letter-spacing: 0.2px;
}
```
